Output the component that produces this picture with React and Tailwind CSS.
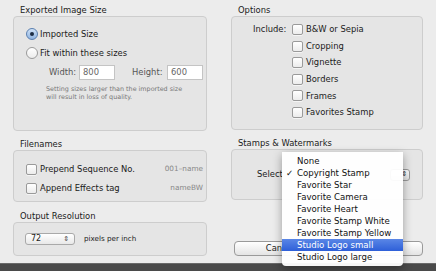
import React from 'react'

const font = { fontFamily: '"DejaVu Sans", "Lucida Grande", sans-serif' }

const options = ['B&W or Sepia', 'Cropping', 'Vignette', 'Borders', 'Frames', 'Favorites Stamp']

const menuItems = [
  'None',
  'Copyright Stamp',
  'Favorite Star',
  'Favorite Camera',
  'Favorite Heart',
  'Favorite Stamp White',
  'Favorite Stamp Yellow',
  'Studio Logo small',
  'Studio Logo large',
]

function Checkbox() {
  return (
    <span className="inline-block h-[11px] w-[11px] shrink-0 rounded-[2px] border border-[#9a9a9a] bg-gradient-to-b from-white to-[#ececec] shadow-[0_1px_0_rgba(255,255,255,0.6)]" />
  )
}

function Radio({ on }) {
  return (
    <span
      className={`flex h-[12px] w-[12px] shrink-0 items-center justify-center rounded-full border ${
        on ? 'border-[#5a7fb0] bg-gradient-to-b from-[#cfe2f7] to-[#8fb3e0]' : 'border-[#9a9a9a] bg-gradient-to-b from-white to-[#ececec]'
      }`}
    >
      {on && <span className="h-[4px] w-[4px] rounded-full bg-[#1c2c44]" />}
    </span>
  )
}

function Group({ title, className, children }) {
  return (
    <div className="flex flex-col">
      <div className="h-[16px] pl-[7px] pt-[5px] text-[8.4px] leading-[10px] text-[#1a1a1a]">{title}</div>
      <div className={`rounded-[4px] border border-[#cdcdcd] bg-[#e5e5e5] ${className}`}>{children}</div>
    </div>
  )
}

export default function App() {
  return (
    <div className="relative h-[271px] w-[436px] overflow-hidden bg-[#ececec] text-[8.4px] text-[#1a1a1a]" style={font}>
      <div className="flex gap-[24px] pl-[13px]">
        <div className="flex w-[194px] flex-col">
          <Group title="Exported Image Size" className="h-[115px] pl-[12px] pt-[11px]">
            <div className="flex h-[12px] items-center gap-[2px]">
              <Radio on />
              <span>Imported Size</span>
            </div>
            <div className="mt-[7px] flex h-[12px] items-center gap-[2px]">
              <Radio />
              <span>Fit within these sizes</span>
            </div>
            <div className="mt-[6px] flex items-center text-[#555]">
              <span className="ml-[23px] w-[30px]">Width:</span>
              <span className="flex h-[15px] w-[36px] items-center border border-[#c4c4c4] bg-white pl-[3px] text-[#666]">800</span>
              <span className="ml-[17px] w-[35px]">Height:</span>
              <span className="flex h-[15px] w-[36px] items-center border border-[#c4c4c4] bg-white pl-[3px] text-[#666]">600</span>
            </div>
            <div className="ml-[20px] mt-[5px] whitespace-nowrap text-[6.4px] leading-[8px] text-[#777]">
              Setting sizes larger than the imported size
              <br />
              will result in loss of quality.
            </div>
          </Group>
          <div className="mt-[3px]">
            <Group title="Filenames" className="h-[52px] pl-[12px] pr-[3px] pt-[12px]">
              <div className="flex h-[12px] items-center gap-[3px]">
                <Checkbox />
                <span className="flex-1">Prepend Sequence No.</span>
                <span className="text-[7.3px] text-[#888]">001–name</span>
              </div>
              <div className="mt-[7px] flex h-[12px] items-center gap-[3px]">
                <Checkbox />
                <span className="flex-1">Append Effects tag</span>
                <span className="text-[7.3px] text-[#888]">nameBW</span>
              </div>
            </Group>
          </div>
          <div className="mt-[4px]">
            <Group title="Output Resolution" className="flex h-[34px] items-center pl-[11px]">
              <span className="flex h-[12px] w-[50px] items-center justify-between rounded-[3px] border border-[#a9a9a9] bg-gradient-to-b from-white to-[#e8e8e8] pl-[5px] pr-[5px] text-[8px]">
                <span>72</span>
                <span className="text-[7px] text-[#444]">⇕</span>
              </span>
              <span className="ml-[9px] text-[7.2px]">pixels per inch</span>
            </Group>
          </div>
        </div>

        <div className="flex w-[192px] flex-col">
          <Group title="Options" className="flex h-[114px] pl-[21px] pt-[7px]">
            <span className="mt-[-1px] w-[39px]">Include:</span>
            <div className="flex flex-col gap-[5.6px]">
              {options.map((o) => (
                <div key={o} className="flex h-[11px] items-center gap-[3px]">
                  <Checkbox />
                  <span>{o}</span>
                </div>
              ))}
            </div>
          </Group>
          <div className="mt-[3px]">
            <Group title="Stamps & Watermarks" className="flex h-[51px] items-center pl-[25px]">
              <span>Select</span>
              <span className="ml-auto mr-[12px] flex h-[12px] w-[20px] items-center justify-end rounded-[3px] border border-[#9a9a9a] bg-gradient-to-b from-white to-[#e0e0e0] pr-[2px] text-[7px]">⇕</span>
            </Group>
          </div>
          <div className="mt-[41px] flex gap-[6px] pl-[3px]">
            <span className="flex h-[15px] w-[92px] items-center justify-center rounded-[4px] border border-[#9a9a9a] bg-gradient-to-b from-white to-[#e4e4e4]">Cancel</span>
            <span className="h-[15px] flex-1 rounded-[4px] border border-[#9a9a9a] bg-gradient-to-b from-white to-[#e4e4e4]" />
          </div>
        </div>
      </div>

      <div className="absolute bottom-0 left-0 h-[8px] w-full border-t border-[#6a6a6a] bg-[#4a4a4a]" />

      <div className="absolute left-[282px] top-[152px] w-[121px] rounded-b-[4px] bg-white/95 py-[3px] shadow-[0_3px_10px_rgba(0,0,0,0.35)]">
        {menuItems.map((m, i) => (
          <div
            key={m}
            className={`relative flex h-[12px] items-center pl-[15px] text-[8.6px] leading-[12px] ${
              i === 7 ? 'bg-gradient-to-b from-[#5a86e6] to-[#2e5fd8] text-white' : 'text-[#111]'
            }`}
          >
            {i === 1 && <span className="absolute left-[4px]">✓</span>}
            {m}
          </div>
        ))}
      </div>
    </div>
  )
}
